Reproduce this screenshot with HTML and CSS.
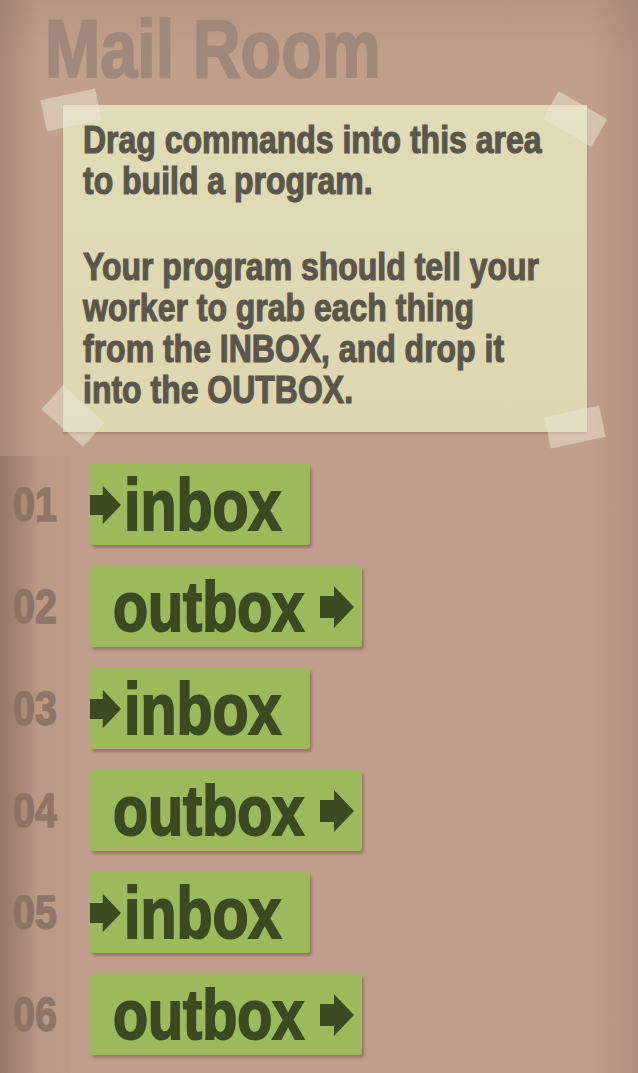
FILE: index.html
```html
<!DOCTYPE html>
<html>
<head>
<meta charset="utf-8">
<link rel="stylesheet" href="styles.css">
</head>
<body>
<div class="page">
  <h1 class="title"><span class="title-text">Mail Room</span></h1>
  <div class="note-wrap">
    <div class="note">
      <p class="note-p">Drag commands into this area<br>to build a program.</p>
      <p class="note-p">Your program should tell your<br>worker to grab each thing<br>from the INBOX, and drop it<br>into the OUTBOX.</p>
    </div>
    <span class="tape tape-tl"></span>
    <span class="tape tape-tr"></span>
    <span class="tape tape-bl"></span>
    <span class="tape tape-br"></span>
  </div>
  <div class="program">
    <div class="row"><span class="num">01</span><div class="cmd cmd-in"><svg class="arrow" viewBox="0 0 34 42"><path d="M0 10H14V0L34 21L14 42V32H0Z"/></svg><span class="cmd-text">inbox</span></div></div>
    <div class="row"><span class="num">02</span><div class="cmd cmd-out"><span class="cmd-text">outbox</span><svg class="arrow" viewBox="0 0 34 42"><path d="M0 10H14V0L34 21L14 42V32H0Z"/></svg></div></div>
    <div class="row"><span class="num">03</span><div class="cmd cmd-in"><svg class="arrow" viewBox="0 0 34 42"><path d="M0 10H14V0L34 21L14 42V32H0Z"/></svg><span class="cmd-text">inbox</span></div></div>
    <div class="row"><span class="num">04</span><div class="cmd cmd-out"><span class="cmd-text">outbox</span><svg class="arrow" viewBox="0 0 34 42"><path d="M0 10H14V0L34 21L14 42V32H0Z"/></svg></div></div>
    <div class="row"><span class="num">05</span><div class="cmd cmd-in"><svg class="arrow" viewBox="0 0 34 42"><path d="M0 10H14V0L34 21L14 42V32H0Z"/></svg><span class="cmd-text">inbox</span></div></div>
    <div class="row"><span class="num">06</span><div class="cmd cmd-out"><span class="cmd-text">outbox</span><svg class="arrow" viewBox="0 0 34 42"><path d="M0 10H14V0L34 21L14 42V32H0Z"/></svg></div></div>
  </div>
</div>
</body>
</html>
```
FILE: styles.css
```css
html, body {
  margin: 0;
  padding: 0;
}
body {
  width: 638px;
  height: 1073px;
  overflow: hidden;
  background: #c09e8c;
  font-family: "Liberation Sans", Arial, sans-serif;
  font-weight: bold;
}
.page {
  width: 638px;
  height: 1073px;
  display: flex;
  flex-direction: column;
  background:
    linear-gradient(to right, rgba(120,90,75,0.35) 0px, rgba(120,90,75,0) 40px, rgba(120,90,75,0) 590px, rgba(120,90,75,0.25) 638px),
    linear-gradient(to bottom, rgba(150,120,100,0.25) 0px, rgba(150,120,100,0) 60px),
    #c19f8d;
}
.title {
  margin: 0;
  padding: 9px 0 0 45px;
  font-size: 81px;
  line-height: 81px;
  font-weight: bold;
  color: #a1887a;
  white-space: nowrap;
}
.title-text {
  display: inline-block;
  transform: scaleX(0.82);
  transform-origin: left center;
  -webkit-text-stroke: 2px #a1887a;
}
.note-wrap {
  position: relative;
  margin: 15px 0 0 63px;
  width: 524px;
}
.note {
  height: 327px;
  box-sizing: border-box;
  padding: 14px 0 0 20px;
  background: linear-gradient(to bottom, #e0dcb8, #dcd7b0);
  box-shadow: 0 2px 2px rgba(110,80,60,0.35);
  color: #5b564b;
  font-size: 39px;
  line-height: 41px;
}
.note-p {
  margin: 0 0 45px 0;
  white-space: nowrap;
  transform: scaleX(0.82);
  transform-origin: left top;
  -webkit-text-stroke: 1.2px #5b564b;
}
.tape {
  position: absolute;
  width: 56px;
  height: 32px;
  background: rgba(236,232,215,0.5);
}
.tape-tl { left: -20px; top: -11px; transform: rotate(-12deg); }
.tape-tr { left: 484px; top: -2px; transform: rotate(30deg); }
.tape-bl { left: -18px; top: 295px; transform: rotate(42deg); }
.tape-br { left: 484px; top: 306px; transform: rotate(-12deg); }
.program {
  margin-top: 24px;
  flex: 1;
  padding-top: 8px;
  display: flex;
  flex-direction: column;
  gap: 21px;
  background: linear-gradient(to right, rgba(110,80,65,0.28) 0px, rgba(110,80,65,0.08) 40px, rgba(110,80,65,0.06) 70px, transparent 70px);
}
.row {
  display: flex;
  align-items: center;
  height: 81px;
}
.num {
  width: 70px;
  text-align: center;
  font-size: 48px;
  color: #8c7164;
  transform: scaleX(0.82);
  -webkit-text-stroke: 1.5px #8c7164;
  opacity: 0.9;
}
.cmd {
  margin-left: 20px;
  height: 81px;
  box-sizing: border-box;
  display: flex;
  align-items: center;
  background: #9cb95c;
  border-radius: 3px;
  box-shadow: 2px 3px 3px rgba(90,60,45,0.4);
  color: #3b4a21;
}
.cmd-in {
  width: 220px;
}
.cmd-out {
  width: 272px;
  padding-left: 23px;
}
.cmd-text {
  display: inline-block;
  font-size: 72px;
  line-height: 72px;
  transform: scaleX(0.82);
  transform-origin: left center;
  -webkit-text-stroke: 2px #3b4a21;
}
.cmd-out .cmd-text {
  font-size: 70px;
  margin-right: -42px;
}
.arrow {
  width: 34px;
  height: 42px;
  fill: #3b4a21;
  flex: none;
}
.cmd-in .arrow {
  width: 31px;
  margin-right: 3px;
}
.cmd-out .arrow {
  margin-left: 16px;
}
```
